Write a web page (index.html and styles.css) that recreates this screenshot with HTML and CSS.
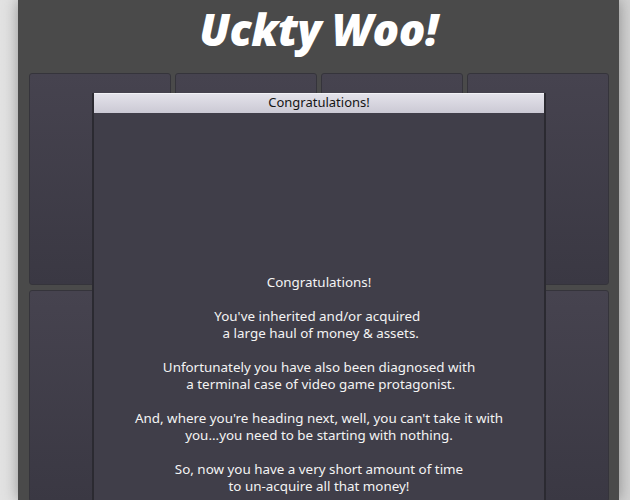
FILE: index.html
```html
<!DOCTYPE html>
<html lang="en">
<head>
  <meta charset="UTF-8" />
  <meta name="viewport" content="width=device-width, initial-scale=1.0" />
  <title>Uckty Woo!</title>
  <link rel="stylesheet" href="styles.css">
</head>
<body>
  <div class="page">
    <h1 class="logo">Uckty Woo!</h1>
    <div class="board">
      <div class="tile"></div>
      <div class="tile"></div>
      <div class="tile"></div>
      <div class="tile"></div>
      <div class="tile"></div>
      <div class="tile"></div>
      <div class="tile"></div>
      <div class="tile"></div>
    </div>

    <div class="dialog">
      <div class="dialog-title">Congratulations!</div>
      <div class="dialog-body">Congratulations!

You've inherited and/or acquired 
 a large haul of money &amp; assets.

Unfortunately you have also been diagnosed with
 a terminal case of video game protagonist.

And, where you're heading next, well, you can't take it with
you...you need to be starting with nothing.

So, now you have a very short amount of time
to un-acquire all that money!</div>
    </div>
  </div>
</body>
</html>
```

FILE: styles.css
```css
body {
  margin: 0;
  font-family: "Noto Sans", "DejaVu Sans", sans-serif;
  background: linear-gradient(to right, #e2e2e2, #d2d2d2);
  overflow: hidden;
}
.page {
  position: relative;
  margin-left: 18px;
  width: 601px;
  height: 100vh;
  background: #4a4a4a;
  box-shadow: 0 0 14px rgba(0, 0, 0, 0.35);
}
.logo {
  margin: 0;
  height: 73px;
  text-align: center;
  font-family: "Open Sans", sans-serif;
  font-weight: 800;
  font-style: italic;
  font-size: 44px;
  line-height: 58px;
  letter-spacing: -0.5px;
  color: #fff;
}
.board {
  display: grid;
  grid-template-columns: repeat(4, 142px);
  grid-auto-rows: 212px;
  gap: 5px 4px;
  padding-left: 11px;
}
.tile {
  border: 1px solid #35343b;
  border-radius: 3px;
  background: linear-gradient(#46434f, #3a3843);
}
.dialog {
  position: absolute;
  left: 76px;
  top: 93px;
  width: 450px;
  height: 500px;
  box-shadow: -2px 0 0 #2b2a31, 2px 0 0 #2b2a31;
}
.dialog-title {
  height: 19px;
  border-top: 1px solid #f2f2f6;
  background: linear-gradient(#e3e2ea, #cbc9d4);
  text-align: center;
  font-size: 13px;
  line-height: 17px;
  color: #151515;
}
.dialog-body {
  height: 100%;
  padding-top: 161px;
  background: #403e49;
  color: #f4f4f4;
  font-size: 13.4px;
  line-height: 17px;
  text-align: center;
  white-space: pre-wrap;
}
```
